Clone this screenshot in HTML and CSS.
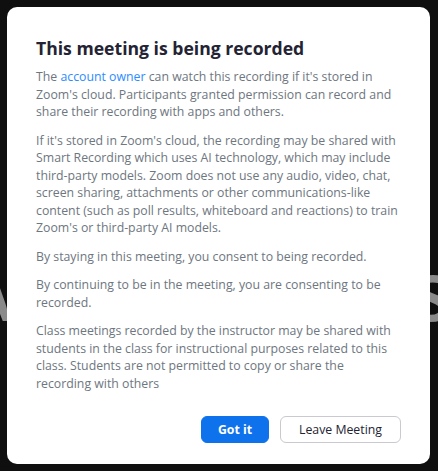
FILE: index.html
```html
<!DOCTYPE html>
<html lang="en">
<head>
    <meta charset="UTF-8">
    <meta name="viewport" content="width=device-width, initial-scale=1.0">
    <title>Recording notice</title>
    <link rel="stylesheet" href="styles.css">
</head>
<body>

    <div class="backdrop">
        <div class="backdrop-name">vy Andrews</div>
    </div>

    <div class="dialog">
        <h1>This meeting is being recorded</h1>
        <p>The <a href="#">account owner</a> can watch this recording if it's stored in Zoom's cloud. Participants granted permission can record and share their recording with apps and others.</p>
        <p>If it's stored in Zoom's cloud, the recording may be shared with Smart Recording which uses AI technology, which may include third-party models. Zoom does not use any audio, video, chat, screen sharing, attachments or other communications-like content (such as poll results, whiteboard and reactions) to train Zoom's or third-party AI models.</p>
        <p>By staying in this meeting, you consent to being recorded.</p>
        <p>By continuing to be in the meeting, you are consenting to be recorded.</p>
        <p>Class meetings recorded by the instructor may be shared with students in the class for instructional purposes related to this class. Students are not permitted to copy or share the recording with others</p>
        <div class="actions">
            <button class="btn btn-primary">Got it</button>
            <button class="btn btn-secondary">Leave Meeting</button>
        </div>
    </div>

</body>
</html>
```

FILE: styles.css
```css
body {
    font-family: "Open Sans", "Noto Sans", sans-serif;
    margin: 0;
    padding: 0;
    width: 438px;
    height: 471px;
    overflow: hidden;
    background-color: #0f0f0f;
    position: relative;
}
.backdrop {
    height: 100%;
    display: flex;
    align-items: center;
    justify-content: center;
    padding-top: 106px;
    box-sizing: border-box;
}
.backdrop-name {
    font-size: 84px;
    font-weight: 600;
    color: #8a8a8a;
    white-space: nowrap;
}
.dialog {
    position: absolute;
    top: 7px;
    left: 7px;
    width: 423px;
    height: 457px;
    box-sizing: border-box;
    padding: 28px 29px 0 29px;
    background-color: #ffffff;
    border-radius: 10px;
}
h1 {
    margin: 0 0 7px 0;
    font-size: 17.6px;
    font-weight: 700;
    line-height: 26px;
    color: #232333;
}
p {
    margin: 0 0 11px 0;
    font-size: 12.3px;
    line-height: 17.5px;
    color: #6e7680;
}
a {
    color: #2d8cff;
    text-decoration: none;
}
.actions {
    display: flex;
    justify-content: flex-end;
    gap: 11px;
    margin-top: 24px;
}
.btn {
    height: 27px;
    padding: 0;
    font-family: "Open Sans", "Noto Sans", sans-serif;
    font-size: 12.3px;
    white-space: nowrap;
    border-radius: 6px;
    cursor: pointer;
}
.btn-primary {
    width: 68px;
    background-color: #0e72ed;
    border: 1px solid #0e72ed;
    color: #ffffff;
    font-weight: 700;
}
.btn-secondary {
    width: 121px;
    background-color: #ffffff;
    border: 1px solid #c9c9cf;
    color: #232333;
}
```
